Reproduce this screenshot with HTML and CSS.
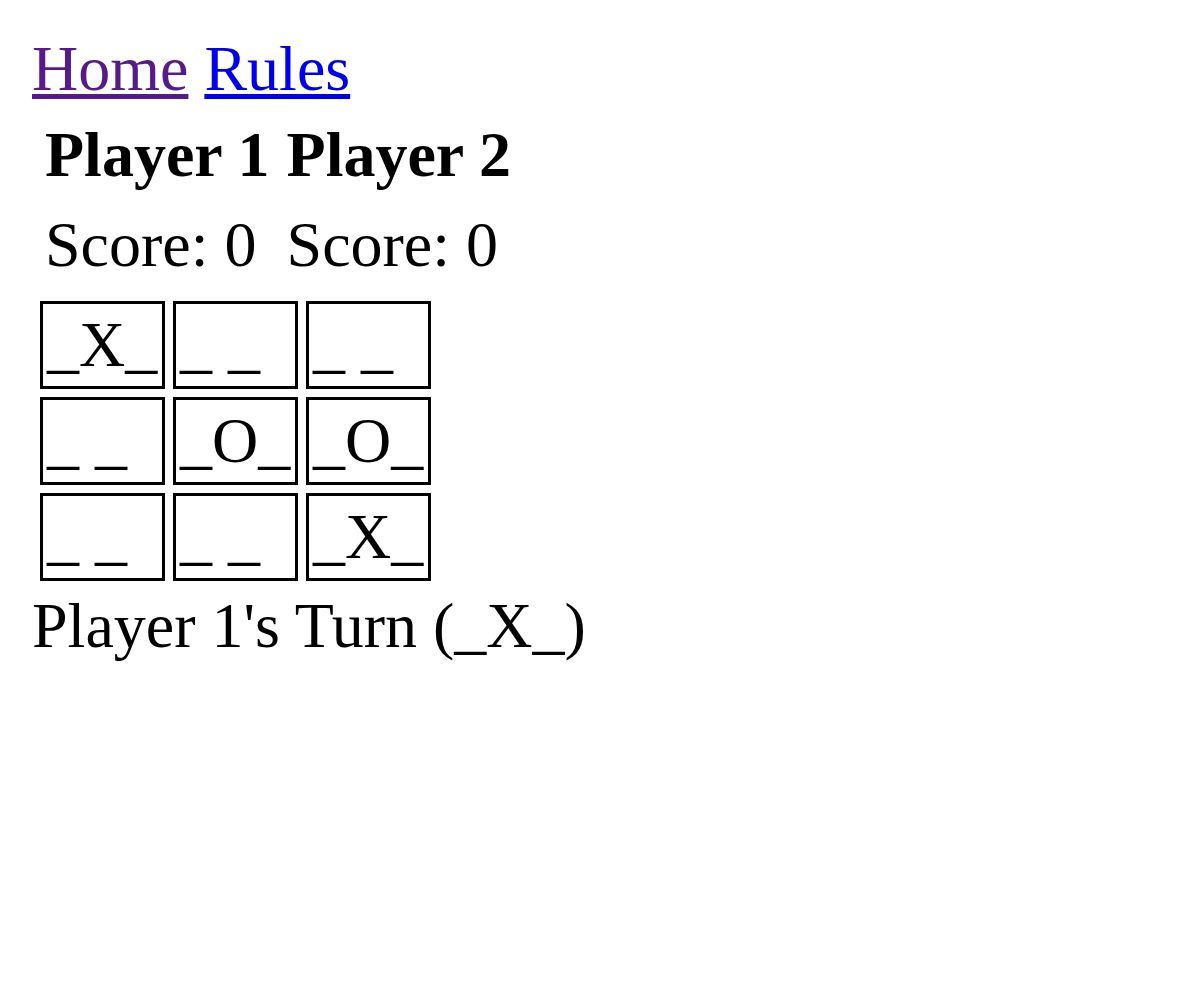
FILE: index.html
```html
<!DOCTYPE html>
<html>
<head>
<meta charset="utf-8">
<link rel="stylesheet" href="styles.css">
</head>
<body>
<nav class="nav"><a class="link visited" href="#">Home</a> <a class="link" href="#rules">Rules</a></nav>
<table class="scores">
<tr><th class="head">Player 1</th><th class="head">Player 2</th></tr>
<tr><td class="score">Score: 0</td><td class="score">Score: 0</td></tr>
</table>
<table class="board">
<tr><td class="cell">_X_</td><td class="cell">_&nbsp;_</td><td class="cell">_&nbsp;_</td></tr>
<tr><td class="cell">_&nbsp;_</td><td class="cell">_O_</td><td class="cell">_O_</td></tr>
<tr><td class="cell">_&nbsp;_</td><td class="cell">_&nbsp;_</td><td class="cell">_X_</td></tr>
</table>
<div class="turn">Player 1's Turn (_X_)</div>
</body>
</html>
```
FILE: styles.css
```css
html, body {
  background: #fff;
}
body {
  margin: 32px;
  font-family: "Liberation Serif", "Times New Roman", serif;
  font-size: 64px;
  color: #000;
}
.nav {
  display: block;
}
.link {
  color: #0000ee;
  text-decoration: underline;
  text-decoration-thickness: 5px;
  text-underline-offset: 4px;
}
.link.visited {
  color: #551a8b;
}
.scores, .board {
  border-collapse: separate;
  border-spacing: 8px;
}
.head {
  font-weight: bold;
  padding: 4px 4px 4px 5px;
  text-align: left;
}
.score {
  padding: 4px 4px 4px 5px;
  text-align: left;
}
.board {
  margin-top: -1px;
}
.cell {
  border: 3px solid #000;
  padding: 4px;
  width: 111px;
  white-space: pre;
  text-align: left;
}
.turn {
  display: block;
}
```
